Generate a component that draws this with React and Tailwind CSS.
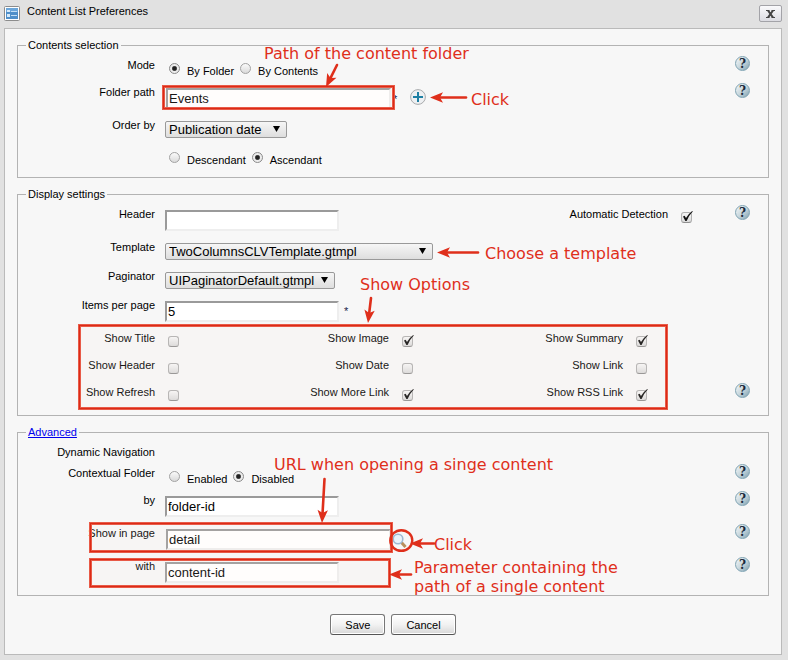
import React from "react";

const arrows = [
  { from: [337, 65], to: [326, 87] },
  { from: [466, 97.5], to: [430, 97.5] },
  { from: [478, 252.5], to: [437, 252.5] },
  { from: [371, 298], to: [368, 323] },
  { from: [324.5, 479], to: [322, 523] },
  { from: [434, 543.5], to: [410, 543.5] },
  { from: [411, 574.5], to: [389, 574.5] },
];

const boxes = [
  { x: 162, y: 85, w: 233, h: 25 },
  { x: 78, y: 324, w: 590, h: 86 },
  { x: 89, y: 522, w: 304, h: 31 },
  { x: 89, y: 558, w: 302, h: 30 },
];

function Arrow({ from, to }) {
  const angle = (Math.atan2(to[1] - from[1], to[0] - from[0]) * 180) / Math.PI;
  const length = Math.hypot(to[0] - from[0], to[1] - from[1]);
  return (
    <g transform={`translate(${to[0]} ${to[1]}) rotate(${angle})`}>
      <path d={`M${-length} 0H-8`} stroke="#df2f1b" strokeWidth="2.6" strokeLinecap="round" />
      <path d="M0 0L-13 -5.2L-10 0L-13 5.2Z" fill="#df2f1b" />
    </g>
  );
}

function Annotations() {
  return (
    <div className="pointer-events-none absolute inset-0 font-['DejaVu_Sans',sans-serif] text-base leading-[19px] whitespace-nowrap text-[#df2f1b]">
      <svg className="absolute top-0 left-0" width="788" height="660" fill="none" aria-hidden="true">
        {boxes.map((b) => (
          <g key={b.y}>
            <rect x={b.x + 1.5} y={b.y + 1.5} width={b.w - 3} height={b.h - 3} fill="#fff0e0" fillOpacity="0.1" stroke="#e85a47" strokeWidth="3" />
            <rect x={b.x + 1.5} y={b.y + 1.5} width={b.w - 3} height={b.h - 3} stroke="#dc2a16" strokeWidth="1" />
          </g>
        ))}
        <ellipse cx="401.3" cy="540.5" rx="11" ry="10.3" stroke="#df2f1b" strokeWidth="2.4" />
        {arrows.map((a) => (
          <Arrow key={a.from[1]} from={a.from} to={a.to} />
        ))}
      </svg>
      <p className="absolute top-[44px] left-[264px]">Path of the content folder</p>
      <p className="absolute top-[90px] left-[471px]">Click</p>
      <p className="absolute top-[244px] left-[485px]">Choose a template</p>
      <p className="absolute top-[275px] left-[360px]">Show Options</p>
      <p className="absolute top-[455px] left-[274px]">URL when opening a singe content</p>
      <p className="absolute top-[535px] left-[434px]">Click</p>
      <p className="absolute top-[558px] left-[414px]">
        Parameter containing the
        <br />
        path of a single content
      </p>
    </div>
  );
}

function Help() {
  return (
    <button
      type="button"
      aria-label="Help"
      className="mr-[18px] ml-auto flex size-[15px] shrink-0 items-center justify-center rounded-full border border-[#7fa3b3] bg-linear-to-br from-[#f4f7f8] via-[#c9d8de] to-[#7fa0b0] font-['DejaVu_Serif',serif] text-[12px] leading-none font-bold text-[#1c2b3c]"
    >
      ?
    </button>
  );
}

function Row({ label, htmlFor, height, help, children }) {
  return (
    <div className={`flex items-start ${height}`}>
      <label htmlFor={htmlFor} className="mr-2.5 w-[137px] shrink-0 text-right leading-[18px]">
        {label}
      </label>
      {children}
      {help && <Help />}
    </div>
  );
}

function TextInput({ id, value = "", wide }) {
  return (
    <input
      id={id}
      type="text"
      defaultValue={value}
      className={`mt-[5px] h-[21px] rounded-none border-2 border-t-[#9a9a9a] border-r-[#eeeeee] border-b-[#eeeeee] border-l-[#9a9a9a] bg-white px-px text-[13px] leading-4 outline-none ${wide ? "ml-px w-[225px]" : "w-[174px]"}`}
    />
  );
}

function Select({ id, value, width }) {
  return (
    <span className={`relative mt-[5px] block ${width}`}>
      <select
        id={id}
        defaultValue={value}
        className="block h-[17px] w-full appearance-none rounded-xs border border-[#999999] bg-linear-to-b from-[#f6f6f6] to-[#dedede] pl-[3px] text-[13px] leading-[15px] outline-none"
      >
        <option>{value}</option>
      </select>
      <svg className="pointer-events-none absolute top-[5px] right-[7px]" width="7" height="6" aria-hidden="true">
        <path d="M0 0H7L3.5 6Z" fill="#000" />
      </svg>
    </span>
  );
}

function Radio({ name, label, checked }) {
  return (
    <label className="flex items-start gap-[7px]">
      <input
        type="radio"
        name={name}
        defaultChecked={checked}
        className="mt-[7px] size-[11px] appearance-none rounded-full border border-[#a2a2a2] bg-linear-to-b from-[#fafafa] to-[#dadada] checked:border-[#8a8a8a] checked:bg-[radial-gradient(circle,#222_0_1.6px,#555_2.2px,#ececec_3px)]"
      />
      <span className="mt-[6px] leading-[18px]">{label}</span>
    </label>
  );
}

function RadioGroup({ name, options, selected }) {
  return (
    <div role="radiogroup" aria-label={name} className="ml-1 flex gap-[6px]">
      {options.map((o) => (
        <Radio key={o} name={name} label={o} checked={o === selected} />
      ))}
    </div>
  );
}

function Checkbox({ id, checked }) {
  return (
    <span className="relative mt-[7px] block size-[11px] shrink-0">
      <input
        id={id}
        type="checkbox"
        defaultChecked={checked}
        className="peer block size-[11px] appearance-none rounded-[3px] border border-[#b0b0b0] border-b-[#8f8f8f] bg-linear-to-b from-[#f6f6f6] to-[#dadada]"
      />
      <svg className="pointer-events-none absolute -top-px left-0 hidden peer-checked:block" width="13" height="12" fill="none" aria-hidden="true">
        <path d="M2 5.6L3.6 4.8L5 7Q7.4 2.8 11.2 0L11.8 0.6Q7.8 4.6 5.6 10H4.4Z" fill="#111" />
      </svg>
    </span>
  );
}

function Option({ id, label, checked }) {
  return (
    <div className="flex w-[234px] shrink-0 items-start gap-[13px]">
      <label htmlFor={id} className="w-[137px] text-right leading-[18px]">
        {label}
      </label>
      <Checkbox id={id} checked={checked} />
    </div>
  );
}

function Section({ title, children }) {
  return (
    <fieldset className="min-w-0 border border-[#b3b3b3] pt-1">
      <legend className="ml-2 h-[13px] px-[2px] leading-[13px]">{title}</legend>
      {children}
    </fieldset>
  );
}

function ActionButton({ children }) {
  return (
    <button
      type="button"
      className="h-[21px] rounded-[3px] border border-[#777777] border-b-[#555555] bg-linear-to-b from-white via-[#f2f2f2] to-[#d8d8d8] px-[14px] leading-[18px] shadow-[inset_0_0_0_1px_#ffffff]"
    >
      {children}
    </button>
  );
}

export default function App() {
  return (
    <div className="relative min-h-screen bg-[#e1e1e1] pr-[6px] pb-[5px] pl-1 font-['Liberation_Sans',Arial,sans-serif] text-[11px] text-black">
      <header className="flex h-7 items-start pt-[5px]">
        <svg className="mt-px" width="16" height="15" aria-hidden="true">
          <rect x="0.5" y="0.5" width="15" height="14" rx="1" fill="#fff" stroke="#8c8c8c" />
          <rect x="2" y="2" width="12" height="11" fill="#4f8fc9" />
          <rect x="2" y="2" width="12" height="4" fill="#6ba6da" />
          <path d="M3 4h3v2H3zM3 8h3v3H3z" fill="#d6eafa" />
          <path d="M7 5.5h6M7 9.5h6" stroke="#c4dff5" />
        </svg>
        <h1 className="ml-[7px] leading-3">Content List Preferences</h1>
        <button
          type="button"
          aria-label="Close"
          className="ml-auto flex h-[17px] w-[23px] items-center justify-center rounded-xs border border-[#a3a3a8] bg-linear-to-b from-[#fafafc] to-[#dcdce2]"
        >
          <svg width="9" height="8" fill="none" aria-hidden="true">
            <path d="M2 0.5L7 7.5M7 0.5L2 7.5" stroke="#444" strokeWidth="2" />
            <path d="M0 0.5H3.5M5.5 0.5H9M0 7.5H3.5M5.5 7.5H9" stroke="#444" />
          </svg>
        </button>
      </header>

      <main className="border border-[#bababa] bg-[#f7f7f7] px-3 pt-2.5 pb-[19px]">
        <form className="flex flex-col gap-2.5">
          <Section title="Contents selection">
            <Row label="Mode" height="h-[27px]" help>
              <RadioGroup name="Mode" options={["By Folder", "By Contents"]} selected="By Folder" />
            </Row>
            <Row label="Folder path" htmlFor="folder" height="h-[33px]" help>
              <TextInput id="folder" value="Events" wide />
              <span className="ml-[2px] w-2 pt-2 leading-[16px] text-[#1b1b4b]">*</span>
              <button type="button" aria-label="Add folder" className="mt-[6px] ml-[9px]">
                <svg className="block" width="16" height="16" aria-hidden="true">
                  <circle cx="8" cy="8" r="7.4" fill="#eef0f2" stroke="#a9abad" />
                  <path d="M8 3v10M3 8h10" stroke="#1e7fa3" strokeWidth="2" />
                </svg>
              </button>
            </Row>
            <Row label="Order by" htmlFor="order" height="h-[29px]">
              <Select id="order" value="Publication date" width="w-[122px]" />
            </Row>
            <Row height="h-8">
              <RadioGroup name="Direction" options={["Descendant", "Ascendant"]} selected="Ascendant" />
            </Row>
          </Section>

          <Section title="Display settings">
            <Row label="Header" htmlFor="header" height="h-[33px]">
              <TextInput id="header" />
              <div className="mr-[43px] ml-auto flex items-start gap-[13px]">
                <label htmlFor="auto" className="leading-[18px]">
                  Automatic Detection
                </label>
                <Checkbox id="auto" checked />
              </div>
              <div>
                <Help />
              </div>
            </Row>
            <Row label="Template" htmlFor="template" height="h-[29px]">
              <Select id="template" value="TwoColumnsCLVTemplate.gtmpl" width="w-[268px]" />
            </Row>
            <Row label="Paginator" htmlFor="paginator" height="h-[29px]">
              <Select id="paginator" value="UIPaginatorDefault.gtmpl" width="w-[170px]" />
            </Row>
            <Row label="Items per page" htmlFor="items" height="h-[33px]">
              <TextInput id="items" value="5" />
              <span className="ml-[5px] pt-[6px] leading-[18px] text-[#1b1b4b]">*</span>
            </Row>
            <div className="flex h-[27px]">
              <Option id="title" label="Show Title" />
              <Option id="image" label="Show Image" checked />
              <Option id="summary" label="Show Summary" checked />
            </div>
            <div className="flex h-[27px]">
              <Option id="show-header" label="Show Header" />
              <Option id="date" label="Show Date" />
              <Option id="link" label="Show Link" />
            </div>
            <div className="flex h-8 items-start">
              <Option id="refresh" label="Show Refresh" />
              <Option id="more" label="Show More Link" checked />
              <Option id="rss" label="Show RSS Link" checked />
              <Help />
            </div>
          </Section>

          <Section
            title={
              <a href="#advanced" className="text-[#0000ee] underline">
                Advanced
              </a>
            }
          >
            <Row label="Dynamic Navigation" height="h-[21px]" />
            <Row label="Contextual Folder" height="h-[27px]" help>
              <RadioGroup name="Contextual Folder" options={["Enabled", "Disabled"]} selected="Disabled" />
            </Row>
            <Row label="by" htmlFor="by" height="h-[33px]" help>
              <TextInput id="by" value="folder-id" />
            </Row>
            <Row label="Show in page" htmlFor="page" height="h-[33px]" help>
              <TextInput id="page" value="detail" wide />
              <button type="button" aria-label="Select page" className="mt-[9px] ml-px">
                <svg className="block" width="15" height="15" fill="none" aria-hidden="true">
                  <path d="M9.5 9.5L13.5 14" stroke="#b98f5c" strokeWidth="3" />
                  <circle cx="6" cy="6" r="4.8" fill="#e9f3fb" stroke="#9db8d2" strokeWidth="1.6" />
                </svg>
              </button>
            </Row>
            <Row label="with" htmlFor="with" height="h-[38px]" help>
              <TextInput id="with" value="content-id" />
            </Row>
          </Section>

          <div className="flex justify-center gap-[6px] pt-2">
            <ActionButton>Save</ActionButton>
            <ActionButton>Cancel</ActionButton>
          </div>
        </form>
      </main>

      <Annotations />
    </div>
  );
}
